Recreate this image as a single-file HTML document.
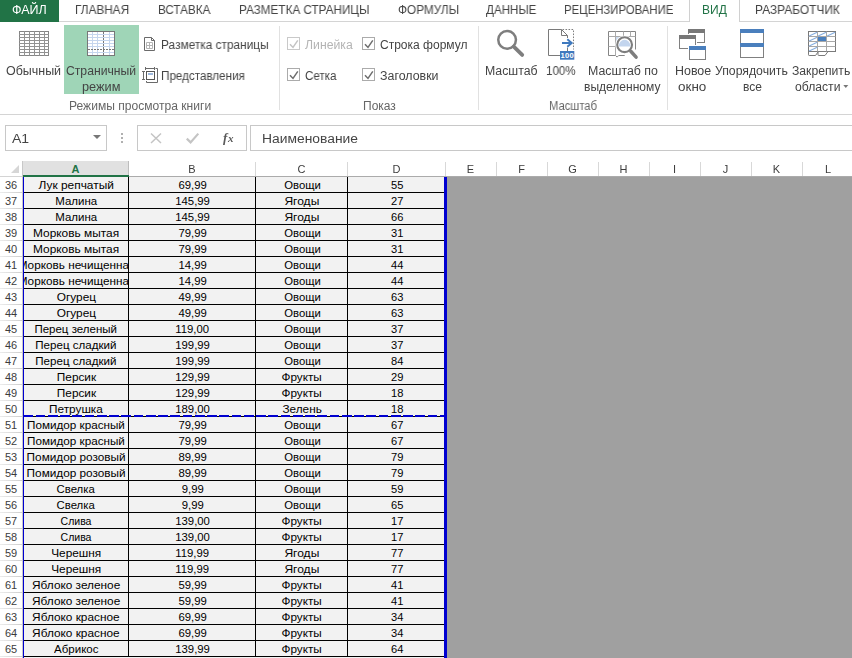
<!DOCTYPE html>
<html><head><meta charset="utf-8">
<style>
*{box-sizing:border-box;margin:0;padding:0}
html,body{width:852px;height:658px;overflow:hidden;background:#fff;font-family:"Liberation Sans",sans-serif}
#r{position:relative;width:852px;height:658px;overflow:hidden;background:#fff}
#r div,#r span,#r svg{position:absolute}
.t{white-space:pre;line-height:1;transform-origin:0 0;display:block;will-change:transform}
.t.l{will-change:auto}
/* grid */
.rn{left:0;width:22px;height:16px;font-size:11px;line-height:16px;color:#3c3c3c;text-align:center}
.rl{left:0;width:22px;height:1px;background:linear-gradient(90deg,#ececec,#cdcdcd)}
.c{height:15px;background:#f2f2f2;overflow:hidden;text-align:center;font-size:10.5px;line-height:15px;color:#000}
.c span{position:static!important;display:inline-block;white-space:pre;transform:translateX(0.6px) scaleX(1.125);transform-origin:50% 50%;padding-top:1px}
.c span.n{transform:translateX(0.5px) scaleX(1.08)}
.cd span.n{transform:translateX(1.4px) scaleX(1.06)}
.ca{left:24px;width:104px}
.cb{left:129px;width:126px}
.cc{left:256px;width:91px}
.cd{left:348px;width:96px}
.hl{left:24px;width:420px;height:1px;background:#000}
.ch{top:162px;width:20px;height:14px;font-size:11px;line-height:14px;text-align:center}
.cs{top:162px;width:1px;height:14px;background:#d8d8d8}
.vl{top:177px;width:1px;height:481px;background:#000}
</style></head><body><div id="r">
<!-- tab strip -->
<div style="left:0;top:0;width:59px;height:22px;background:#217346"></div>
<div style="left:59px;top:21px;width:793px;height:1px;background:#d4d4d4"></div>
<div style="left:689px;top:-1px;width:51px;height:23px;border:1px solid #d0d0d0;border-bottom:none;background:#fff"></div>
<!-- ribbon -->
<div style="left:64px;top:25px;width:75px;height:69px;background:#9fd5b7"></div>
<div style="left:279px;top:26px;width:1px;height:84px;background:#e1e1e1"></div>
<div style="left:478px;top:26px;width:1px;height:84px;background:#e1e1e1"></div>
<div style="left:667px;top:26px;width:1px;height:84px;background:#e1e1e1"></div>
<div style="left:0;top:114px;width:852px;height:1px;background:#d4d4d4"></div>
<!-- icon: normal view -->
<svg style="left:19px;top:31px" width="30" height="25" viewBox="0 0 30 25" shape-rendering="crispEdges">
<rect x="0.5" y="0.5" width="29" height="24" fill="#fff" stroke="#858585"/>
<path d="M5.500 0v25M10.500 0v25M15.500 0v25M20.500 0v25M25.500 0v25" stroke="#929292" fill="none"/>
<path d="M0 3.500h30M0 6.500h30M0 9.500h30M0 12.500h30M0 15.500h30M0 18.500h30M0 21.500h30" stroke="#929292" fill="none"/>
</svg>
<!-- icon: page break preview -->
<svg style="left:87px;top:31px" width="28" height="25" viewBox="0 0 28 25" shape-rendering="crispEdges">
<rect x="0.500" y="0.500" width="27" height="24" fill="#fff" stroke="#777"/>
<path d="M1 3.500h26M1 6.500h26M1 9.500h26M1 12.500h26M1 15.500h26M1 21.500h26" stroke="#c6d6ee" fill="none"/>
<path d="M5.500 1v23M10.500 1v23M22.500 1v23" stroke="#c6d6ee" fill="none"/>
<path d="M16.500 1v23" stroke="#777" stroke-dasharray="2 1" fill="none"/>
<path d="M1 18.500h26" stroke="#777" stroke-dasharray="2 1" fill="none"/>
</svg>
<!-- icon: page layout -->
<svg style="left:144px;top:37px" width="12" height="15" viewBox="0 0 12 15">
<path d="M0.5 0.5h7l3 3v10h-10z" fill="#fff" stroke="#6a6a6a"/>
<path d="M7.5 0.5v3h3" fill="none" stroke="#6a6a6a"/>
<path d="M2.5 5.5h6v6h-6zM5.5 5.5v6M2.5 8.5h6" fill="none" stroke="#b4b4b4"/>
</svg>
<!-- icon: custom views -->
<svg style="left:141px;top:66px" width="18" height="18" viewBox="0 0 18 18">
<path d="M4.5 2.5h9M4.5 1v3M13.5 1v3M2.5 5.5v8M1 5.5h3M1 13.5h3" stroke="#6a6a6a" fill="none"/>
<rect x="5.5" y="5.5" width="8" height="8" fill="#fff" stroke="#555"/>
<rect x="7" y="7" width="5" height="2" fill="#9db8dd"/>
<path d="M14.5 2.5h2v14h-11v-1.5" stroke="#6a6a6a" fill="none"/>
</svg>
<!-- checkboxes -->
<svg style="left:287px;top:37px" width="13" height="13" viewBox="0 0 13 13"><rect x="0.5" y="0.5" width="12" height="12" fill="#fff" stroke="#c9c9c9"/><path d="M3 7.2l3 3.2l4.8-7" stroke="#c4c4c4" stroke-width="1.5" fill="none"/></svg>
<svg style="left:362px;top:37px" width="13" height="13" viewBox="0 0 13 13"><rect x="0.5" y="0.5" width="12" height="12" fill="#fff" stroke="#ababab"/><path d="M3 7.2l3 3.2l4.8-7" stroke="#6e6e6e" stroke-width="1.5" fill="none"/></svg>
<svg style="left:287px;top:68px" width="13" height="13" viewBox="0 0 13 13"><rect x="0.5" y="0.5" width="12" height="12" fill="#fff" stroke="#ababab"/><path d="M3 7.2l3 3.2l4.8-7" stroke="#6e6e6e" stroke-width="1.5" fill="none"/></svg>
<svg style="left:362px;top:68px" width="13" height="13" viewBox="0 0 13 13"><rect x="0.5" y="0.5" width="12" height="12" fill="#fff" stroke="#ababab"/><path d="M3 7.2l3 3.2l4.8-7" stroke="#6e6e6e" stroke-width="1.5" fill="none"/></svg>
<!-- icon: zoom -->
<svg style="left:494px;top:28px" width="32" height="32" viewBox="0 0 32 32">
<circle cx="13.100" cy="11.800" r="8.850" fill="#fff" stroke="#7e7e7e" stroke-width="2.500"/>
<path d="M19.800 18.600l8.400 8.300" stroke="#7e7e7e" stroke-width="3.800" stroke-linecap="round"/>
</svg>
<!-- icon: 100% -->
<svg style="left:546px;top:28px" width="30" height="34" viewBox="0 0 30 34">
<path d="M2.500 1.500h13l6 6v20h-19z" fill="#fff" stroke="#7a7a7a"/>
<path d="M15.500 1.500v6h6" fill="none" stroke="#7a7a7a"/>
<path d="M16.500 1.500h11v20" fill="none" stroke="#7e7e7e" stroke-dasharray="1.600 1.400"/>
<rect x="14.500" y="10" width="12" height="9.500" fill="#fff"/>
<path d="M16 15h9.500M21.300 11.300l4.400 3.700l-4.400 3.700" fill="none" stroke="#3f79be" stroke-width="1.900"/>
<rect x="14" y="23" width="14.300" height="8.700" fill="#3f79be"/>
<text x="21.200" y="30.400" font-family="Liberation Sans" font-size="7.600" font-weight="700" fill="#fff" text-anchor="middle" letter-spacing="0.3">100</text>
</svg>
<!-- icon: zoom to selection -->
<svg style="left:606px;top:28px" width="34" height="34" viewBox="0 0 34 34">
<path d="M2.500 3.500h27v18M2.500 3.500v24h7l1.600 1.600l1.600-1.600h6" fill="#fff" stroke="#858585"/>
<path d="M2.500 8.500h27M2.500 18.500h9M9.500 3.500v24M17.500 3.500v5M24.500 3.500v5" fill="none" stroke="#ababab"/>
<rect x="10" y="9" width="8" height="6" fill="#c9d9ef"/>
<circle cx="18.600" cy="16.700" r="9.300" fill="#fff"/>
<path d="M24.600 23.200l5.700 6.100" stroke="#fff" stroke-width="5.500" stroke-linecap="round"/>
<circle cx="18.600" cy="16.700" r="7.400" fill="#fff" stroke="#7e7e7e" stroke-width="2.100"/>
<path d="M12.700 18.400a5.900 6.600 0 0 1 11.800 0z" fill="#c3d5ee"/>
<path d="M24.800 23.300l5.300 5.800" stroke="#7e7e7e" stroke-width="3.500" stroke-linecap="round"/>
</svg>
<!-- icon: new window -->
<svg style="left:678px;top:28px" width="30" height="33" viewBox="0 0 30 33" shape-rendering="crispEdges">
<rect x="10.5" y="1.5" width="16" height="13" fill="#fff" stroke="#808080"/>
<rect x="10" y="1" width="17" height="4" fill="#787878"/>
<rect x="0" y="6" width="19" height="16" fill="#fff"/>
<rect x="1.5" y="7.5" width="16" height="13" fill="#fff" stroke="#808080"/>
<rect x="1" y="7" width="17" height="4" fill="#787878"/>
<rect x="10" y="17" width="19" height="16" fill="#fff"/>
<rect x="11.5" y="18.5" width="16" height="13" fill="#fff" stroke="#808080"/>
<rect x="11" y="18" width="17" height="4" fill="#4a7fbd"/>
</svg>
<!-- icon: arrange all -->
<svg style="left:739px;top:28px" width="27" height="31" viewBox="0 0 27 31" shape-rendering="crispEdges">
<rect x="1.5" y="1.5" width="23" height="28" fill="#fff" stroke="#808080"/>
<rect x="1" y="1" width="24" height="4" fill="#4a7fbd"/>
<rect x="1" y="15" width="24" height="4" fill="#4a7fbd"/>
</svg>
<!-- icon: freeze panes -->
<svg style="left:807px;top:30px" width="30" height="27" viewBox="0 0 30 27">
<rect x="1.5" y="1.5" width="27" height="20" fill="#fff" stroke="#7a7a7a"/>
<path d="M1.5 6.5h27M1.5 11.5h27M1.5 16.5h27M10.5 1.5v20M19.5 1.5v20" fill="none" stroke="#a8a8a8"/>
<path d="M2.2 6l8-3.8M2.2 11l8-3.8M2.2 16l8-3.800M2.2 21l8-3.800M11.200 6l8-3.800M20.200 6l8-3.800" stroke="#86aee0" stroke-width="1.100" fill="none"/>
<rect x="11" y="7" width="8" height="4" fill="#4a7fbd"/>
<path d="M1.500 21.500v3.300q0 .7 .7 .7h6.300l2.500-3.500v2.800q0 .7 .7 .7h6.300l3-4" fill="none" stroke="#7a7a7a"/>
</svg>
<!-- dropdown arrow for freeze -->
<svg style="left:843px;top:85px" width="6" height="4" viewBox="0 0 6 4"><path d="M0.300 0h5l-2.500 3z" fill="#777"/></svg>
<!-- name box arrow -->
<svg style="left:93px;top:135px" width="8" height="4" viewBox="0 0 8 4"><path d="M0 0h8l-4 4z" fill="#777"/></svg>
<!-- dots -->
<div style="left:121px;top:133px;width:2px;height:2px;background:#b0b0b0"></div>
<div style="left:121px;top:137px;width:2px;height:2px;background:#b0b0b0"></div>
<div style="left:121px;top:141px;width:2px;height:2px;background:#b0b0b0"></div>
<!-- X, check, fx -->
<svg style="left:150px;top:132px" width="12" height="12" viewBox="0 0 12 12"><path d="M1 1.500l10 9.500M11 1.500l-10 9.500" stroke="#c4c4c4" stroke-width="1.500" fill="none"/></svg>
<svg style="left:185px;top:132px" width="16" height="12" viewBox="0 0 16 12"><path d="M1.800 6.600l3.800 3.800l7.700-8.800" stroke="#c4c4c4" stroke-width="2.200" fill="none"/></svg>
<span class="t" style="left:223px;top:131px;font-family:'Liberation Serif',serif;font-style:italic;font-weight:700;font-size:13px;color:#5a5a5a">f</span>
<span class="t" style="left:227.800px;top:133px;font-family:'Liberation Serif',serif;font-style:italic;font-weight:700;font-size:11px;color:#5a5a5a">x</span>
<!-- select all triangle -->
<svg style="left:11px;top:165px" width="8" height="8" viewBox="0 0 8 8"><path d="M8 0v8h-8z" fill="#d6d6d6"/></svg>

<!-- formula bar -->
<div style="left:5px;top:125px;width:102px;height:26px;border:1px solid #c8c8c8"></div>
<div style="left:137px;top:125px;width:110px;height:26px;border:1px solid #c8c8c8"></div>
<div style="left:250px;top:125px;width:610px;height:26px;border:1px solid #c8c8c8"></div>
<!-- column headers -->
<div style="left:22px;top:161px;width:107px;height:14px;background:#e1e1e1"></div>
<div style="left:22px;top:175px;width:107px;height:2px;background:#217346"></div>
<div style="left:128px;top:161px;width:1px;height:14px;background:#bdbdbd"></div>
<div style="left:129px;top:176px;width:723px;height:1px;background:#ababab"></div>
<div style="left:0;top:176px;width:22px;height:1px;background:#d4d4d4"></div>
<!-- gray area -->
<div style="left:447px;top:177px;width:405px;height:481px;background:#a0a0a0"></div>
<!-- grid -->
<div style="left:23px;top:177px;width:1px;height:481px;background:#0000d0"></div>
<div style="left:22px;top:161px;width:1px;height:497px;background:#c8c8c8"></div>
<div class="vl" style="left:128px"></div>
<div class="vl" style="left:255px"></div>
<div class="vl" style="left:347px"></div>
<div style="left:24px;top:657px;width:420px;height:1px;background:#f2f2f2"></div>
<div class="rn" style="top:177px">36</div>
<div class="c ca" style="top:177px"><span style="transform:translateX(0px) scaleX(1.133)">Лук репчатый</span></div>
<div class="c cb" style="top:177px"><span class="n">69,99</span></div>
<div class="c cc" style="top:177px"><span style="transform:translateX(0.6px) scaleX(1.075)">Овощи</span></div>
<div class="c cd" style="top:177px"><span class="n">55</span></div>
<div class="hl" style="top:192px"></div>
<div class="rl" style="top:192px"></div>
<div class="rn" style="top:193px">37</div>
<div class="c ca" style="top:193px"><span style="transform:translateX(0px) scaleX(1.093)">Малина</span></div>
<div class="c cb" style="top:193px"><span class="n">145,99</span></div>
<div class="c cc" style="top:193px"><span style="transform:translateX(0.6px) scaleX(1.145)">Ягоды</span></div>
<div class="c cd" style="top:193px"><span class="n">27</span></div>
<div class="hl" style="top:208px"></div>
<div class="rl" style="top:208px"></div>
<div class="rn" style="top:209px">38</div>
<div class="c ca" style="top:209px"><span style="transform:translateX(0px) scaleX(1.093)">Малина</span></div>
<div class="c cb" style="top:209px"><span class="n">145,99</span></div>
<div class="c cc" style="top:209px"><span style="transform:translateX(0.6px) scaleX(1.145)">Ягоды</span></div>
<div class="c cd" style="top:209px"><span class="n">66</span></div>
<div class="hl" style="top:224px"></div>
<div class="rl" style="top:224px"></div>
<div class="rn" style="top:225px">39</div>
<div class="c ca" style="top:225px"><span style="transform:translateX(0px) scaleX(1.132)">Морковь мытая</span></div>
<div class="c cb" style="top:225px"><span class="n">79,99</span></div>
<div class="c cc" style="top:225px"><span style="transform:translateX(0.6px) scaleX(1.075)">Овощи</span></div>
<div class="c cd" style="top:225px"><span class="n">31</span></div>
<div class="hl" style="top:240px"></div>
<div class="rl" style="top:240px"></div>
<div class="rn" style="top:241px">40</div>
<div class="c ca" style="top:241px"><span style="transform:translateX(0px) scaleX(1.132)">Морковь мытая</span></div>
<div class="c cb" style="top:241px"><span class="n">79,99</span></div>
<div class="c cc" style="top:241px"><span style="transform:translateX(0.6px) scaleX(1.075)">Овощи</span></div>
<div class="c cd" style="top:241px"><span class="n">31</span></div>
<div class="hl" style="top:256px"></div>
<div class="rl" style="top:256px"></div>
<div class="rn" style="top:257px">41</div>
<div class="c ca" style="top:257px"><span style="transform:translateX(0px) scaleX(1.12)">Морковь нечищенная</span></div>
<div class="c cb" style="top:257px"><span class="n">14,99</span></div>
<div class="c cc" style="top:257px"><span style="transform:translateX(0.6px) scaleX(1.075)">Овощи</span></div>
<div class="c cd" style="top:257px"><span class="n">44</span></div>
<div class="hl" style="top:272px"></div>
<div class="rl" style="top:272px"></div>
<div class="rn" style="top:273px">42</div>
<div class="c ca" style="top:273px"><span style="transform:translateX(0px) scaleX(1.12)">Морковь нечищенная</span></div>
<div class="c cb" style="top:273px"><span class="n">14,99</span></div>
<div class="c cc" style="top:273px"><span style="transform:translateX(0.6px) scaleX(1.075)">Овощи</span></div>
<div class="c cd" style="top:273px"><span class="n">44</span></div>
<div class="hl" style="top:288px"></div>
<div class="rl" style="top:288px"></div>
<div class="rn" style="top:289px">43</div>
<div class="c ca" style="top:289px"><span style="transform:translateX(0px) scaleX(1.128)">Огурец</span></div>
<div class="c cb" style="top:289px"><span class="n">49,99</span></div>
<div class="c cc" style="top:289px"><span style="transform:translateX(0.6px) scaleX(1.075)">Овощи</span></div>
<div class="c cd" style="top:289px"><span class="n">63</span></div>
<div class="hl" style="top:304px"></div>
<div class="rl" style="top:304px"></div>
<div class="rn" style="top:305px">44</div>
<div class="c ca" style="top:305px"><span style="transform:translateX(0px) scaleX(1.128)">Огурец</span></div>
<div class="c cb" style="top:305px"><span class="n">49,99</span></div>
<div class="c cc" style="top:305px"><span style="transform:translateX(0.6px) scaleX(1.075)">Овощи</span></div>
<div class="c cd" style="top:305px"><span class="n">63</span></div>
<div class="hl" style="top:320px"></div>
<div class="rl" style="top:320px"></div>
<div class="rn" style="top:321px">45</div>
<div class="c ca" style="top:321px"><span style="transform:translateX(0px) scaleX(1.095)">Перец зеленый</span></div>
<div class="c cb" style="top:321px"><span class="n">119,00</span></div>
<div class="c cc" style="top:321px"><span style="transform:translateX(0.6px) scaleX(1.075)">Овощи</span></div>
<div class="c cd" style="top:321px"><span class="n">37</span></div>
<div class="hl" style="top:336px"></div>
<div class="rl" style="top:336px"></div>
<div class="rn" style="top:337px">46</div>
<div class="c ca" style="top:337px"><span style="transform:translateX(0px) scaleX(1.101)">Перец сладкий</span></div>
<div class="c cb" style="top:337px"><span class="n">199,99</span></div>
<div class="c cc" style="top:337px"><span style="transform:translateX(0.6px) scaleX(1.075)">Овощи</span></div>
<div class="c cd" style="top:337px"><span class="n">37</span></div>
<div class="hl" style="top:352px"></div>
<div class="rl" style="top:352px"></div>
<div class="rn" style="top:353px">47</div>
<div class="c ca" style="top:353px"><span style="transform:translateX(0px) scaleX(1.101)">Перец сладкий</span></div>
<div class="c cb" style="top:353px"><span class="n">199,99</span></div>
<div class="c cc" style="top:353px"><span style="transform:translateX(0.6px) scaleX(1.075)">Овощи</span></div>
<div class="c cd" style="top:353px"><span class="n">84</span></div>
<div class="hl" style="top:368px"></div>
<div class="rl" style="top:368px"></div>
<div class="rn" style="top:369px">48</div>
<div class="c ca" style="top:369px"><span style="transform:translateX(0px) scaleX(1.125)">Персик</span></div>
<div class="c cb" style="top:369px"><span class="n">129,99</span></div>
<div class="c cc" style="top:369px"><span style="transform:translateX(0.6px) scaleX(1.118)">Фрукты</span></div>
<div class="c cd" style="top:369px"><span class="n">29</span></div>
<div class="hl" style="top:384px"></div>
<div class="rl" style="top:384px"></div>
<div class="rn" style="top:385px">49</div>
<div class="c ca" style="top:385px"><span style="transform:translateX(0px) scaleX(1.125)">Персик</span></div>
<div class="c cb" style="top:385px"><span class="n">129,99</span></div>
<div class="c cc" style="top:385px"><span style="transform:translateX(0.6px) scaleX(1.118)">Фрукты</span></div>
<div class="c cd" style="top:385px"><span class="n">18</span></div>
<div class="hl" style="top:400px"></div>
<div class="rl" style="top:400px"></div>
<div class="rn" style="top:401px">50</div>
<div class="c ca" style="top:401px"><span style="transform:translateX(0px) scaleX(1.121)">Петрушка</span></div>
<div class="c cb" style="top:401px"><span class="n">189,00</span></div>
<div class="c cc" style="top:401px"><span style="transform:translateX(0.6px) scaleX(1.12)">Зелень</span></div>
<div class="c cd" style="top:401px"><span class="n">18</span></div>
<div class="hl" style="top:416px"></div>
<div class="rl" style="top:416px"></div>
<div class="rn" style="top:417px">51</div>
<div class="c ca" style="top:417px"><span style="transform:translateX(0px) scaleX(1.113)">Помидор красный</span></div>
<div class="c cb" style="top:417px"><span class="n">79,99</span></div>
<div class="c cc" style="top:417px"><span style="transform:translateX(0.6px) scaleX(1.075)">Овощи</span></div>
<div class="c cd" style="top:417px"><span class="n">67</span></div>
<div class="hl" style="top:432px"></div>
<div class="rl" style="top:432px"></div>
<div class="rn" style="top:433px">52</div>
<div class="c ca" style="top:433px"><span style="transform:translateX(0px) scaleX(1.113)">Помидор красный</span></div>
<div class="c cb" style="top:433px"><span class="n">79,99</span></div>
<div class="c cc" style="top:433px"><span style="transform:translateX(0.6px) scaleX(1.075)">Овощи</span></div>
<div class="c cd" style="top:433px"><span class="n">67</span></div>
<div class="hl" style="top:448px"></div>
<div class="rl" style="top:448px"></div>
<div class="rn" style="top:449px">53</div>
<div class="c ca" style="top:449px"><span style="transform:translateX(0px) scaleX(1.122)">Помидор розовый</span></div>
<div class="c cb" style="top:449px"><span class="n">89,99</span></div>
<div class="c cc" style="top:449px"><span style="transform:translateX(0.6px) scaleX(1.075)">Овощи</span></div>
<div class="c cd" style="top:449px"><span class="n">79</span></div>
<div class="hl" style="top:464px"></div>
<div class="rl" style="top:464px"></div>
<div class="rn" style="top:465px">54</div>
<div class="c ca" style="top:465px"><span style="transform:translateX(0px) scaleX(1.122)">Помидор розовый</span></div>
<div class="c cb" style="top:465px"><span class="n">89,99</span></div>
<div class="c cc" style="top:465px"><span style="transform:translateX(0.6px) scaleX(1.075)">Овощи</span></div>
<div class="c cd" style="top:465px"><span class="n">79</span></div>
<div class="hl" style="top:480px"></div>
<div class="rl" style="top:480px"></div>
<div class="rn" style="top:481px">55</div>
<div class="c ca" style="top:481px"><span style="transform:translateX(0px) scaleX(1.08)">Свелка</span></div>
<div class="c cb" style="top:481px"><span class="n">9,99</span></div>
<div class="c cc" style="top:481px"><span style="transform:translateX(0.6px) scaleX(1.075)">Овощи</span></div>
<div class="c cd" style="top:481px"><span class="n">59</span></div>
<div class="hl" style="top:496px"></div>
<div class="rl" style="top:496px"></div>
<div class="rn" style="top:497px">56</div>
<div class="c ca" style="top:497px"><span style="transform:translateX(0px) scaleX(1.08)">Свелка</span></div>
<div class="c cb" style="top:497px"><span class="n">9,99</span></div>
<div class="c cc" style="top:497px"><span style="transform:translateX(0.6px) scaleX(1.075)">Овощи</span></div>
<div class="c cd" style="top:497px"><span class="n">65</span></div>
<div class="hl" style="top:512px"></div>
<div class="rl" style="top:512px"></div>
<div class="rn" style="top:513px">57</div>
<div class="c ca" style="top:513px"><span style="transform:translateX(0px) scaleX(1.0)">Слива</span></div>
<div class="c cb" style="top:513px"><span class="n">139,00</span></div>
<div class="c cc" style="top:513px"><span style="transform:translateX(0.6px) scaleX(1.118)">Фрукты</span></div>
<div class="c cd" style="top:513px"><span class="n">17</span></div>
<div class="hl" style="top:528px"></div>
<div class="rl" style="top:528px"></div>
<div class="rn" style="top:529px">58</div>
<div class="c ca" style="top:529px"><span style="transform:translateX(0px) scaleX(1.0)">Слива</span></div>
<div class="c cb" style="top:529px"><span class="n">139,00</span></div>
<div class="c cc" style="top:529px"><span style="transform:translateX(0.6px) scaleX(1.118)">Фрукты</span></div>
<div class="c cd" style="top:529px"><span class="n">17</span></div>
<div class="hl" style="top:544px"></div>
<div class="rl" style="top:544px"></div>
<div class="rn" style="top:545px">59</div>
<div class="c ca" style="top:545px"><span style="transform:translateX(0px) scaleX(1.125)">Черешня</span></div>
<div class="c cb" style="top:545px"><span class="n">119,99</span></div>
<div class="c cc" style="top:545px"><span style="transform:translateX(0.6px) scaleX(1.145)">Ягоды</span></div>
<div class="c cd" style="top:545px"><span class="n">77</span></div>
<div class="hl" style="top:560px"></div>
<div class="rl" style="top:560px"></div>
<div class="rn" style="top:561px">60</div>
<div class="c ca" style="top:561px"><span style="transform:translateX(0px) scaleX(1.125)">Черешня</span></div>
<div class="c cb" style="top:561px"><span class="n">119,99</span></div>
<div class="c cc" style="top:561px"><span style="transform:translateX(0.6px) scaleX(1.145)">Ягоды</span></div>
<div class="c cd" style="top:561px"><span class="n">77</span></div>
<div class="hl" style="top:576px"></div>
<div class="rl" style="top:576px"></div>
<div class="rn" style="top:577px">61</div>
<div class="c ca" style="top:577px"><span style="transform:translateX(0px) scaleX(1.126)">Яблоко зеленое</span></div>
<div class="c cb" style="top:577px"><span class="n">59,99</span></div>
<div class="c cc" style="top:577px"><span style="transform:translateX(0.6px) scaleX(1.118)">Фрукты</span></div>
<div class="c cd" style="top:577px"><span class="n">41</span></div>
<div class="hl" style="top:592px"></div>
<div class="rl" style="top:592px"></div>
<div class="rn" style="top:593px">62</div>
<div class="c ca" style="top:593px"><span style="transform:translateX(0px) scaleX(1.126)">Яблоко зеленое</span></div>
<div class="c cb" style="top:593px"><span class="n">59,99</span></div>
<div class="c cc" style="top:593px"><span style="transform:translateX(0.6px) scaleX(1.118)">Фрукты</span></div>
<div class="c cd" style="top:593px"><span class="n">41</span></div>
<div class="hl" style="top:608px"></div>
<div class="rl" style="top:608px"></div>
<div class="rn" style="top:609px">63</div>
<div class="c ca" style="top:609px"><span style="transform:translateX(0px) scaleX(1.126)">Яблоко красное</span></div>
<div class="c cb" style="top:609px"><span class="n">69,99</span></div>
<div class="c cc" style="top:609px"><span style="transform:translateX(0.6px) scaleX(1.118)">Фрукты</span></div>
<div class="c cd" style="top:609px"><span class="n">34</span></div>
<div class="hl" style="top:624px"></div>
<div class="rl" style="top:624px"></div>
<div class="rn" style="top:625px">64</div>
<div class="c ca" style="top:625px"><span style="transform:translateX(0px) scaleX(1.126)">Яблоко красное</span></div>
<div class="c cb" style="top:625px"><span class="n">69,99</span></div>
<div class="c cc" style="top:625px"><span style="transform:translateX(0.6px) scaleX(1.118)">Фрукты</span></div>
<div class="c cd" style="top:625px"><span class="n">34</span></div>
<div class="hl" style="top:640px"></div>
<div class="rl" style="top:640px"></div>
<div class="rn" style="top:641px">65</div>
<div class="c ca" style="top:641px"><span style="transform:translateX(0px) scaleX(1.095)">Абрикос</span></div>
<div class="c cb" style="top:641px"><span class="n">139,99</span></div>
<div class="c cc" style="top:641px"><span style="transform:translateX(0.6px) scaleX(1.118)">Фрукты</span></div>
<div class="c cd" style="top:641px"><span class="n">64</span></div>
<div class="hl" style="top:656px"></div>
<div class="rl" style="top:656px"></div>
<div class="ch" style="left:65.5px;color:#217346;font-weight:700">A</div>
<div class="ch" style="left:182px;color:#3c3c3c">B</div>
<div class="ch" style="left:291.5px;color:#3c3c3c">C</div>
<div class="ch" style="left:386.5px;color:#3c3c3c">D</div>
<div class="ch" style="left:460.5px;color:#3c3c3c">E</div>
<div class="ch" style="left:511.5px;color:#3c3c3c">F</div>
<div class="ch" style="left:562.5px;color:#3c3c3c">G</div>
<div class="ch" style="left:613.5px;color:#3c3c3c">H</div>
<div class="ch" style="left:664.5px;color:#3c3c3c">I</div>
<div class="ch" style="left:715.5px;color:#3c3c3c">J</div>
<div class="ch" style="left:766.5px;color:#3c3c3c">K</div>
<div class="ch" style="left:818px;color:#3c3c3c">L</div>
<div class="cs" style="left:255px"></div>
<div class="cs" style="left:347px"></div>
<div class="cs" style="left:445px"></div>
<div class="cs" style="left:496px"></div>
<div class="cs" style="left:547px"></div>
<div class="cs" style="left:598px"></div>
<div class="cs" style="left:649px"></div>
<div class="cs" style="left:700px"></div>
<div class="cs" style="left:751px"></div>
<div class="cs" style="left:802px"></div>
<div style="left:24px;top:415px;width:420px;height:2px;background:repeating-linear-gradient(90deg,#0000d0 0,#0000d0 9px,transparent 9px,transparent 11.650px,#0000d0 11.650px,#0000d0 12.250px)"></div>
<div style="left:444px;top:177px;width:3px;height:481px;background:#0000d0"></div>
<span class="t" style="left:11.55px;top:3.84px;font-size:12px;color:#fff;font-weight:400;font-style:normal;transform:scaleX(1.0427)">ФАЙЛ</span>
<span class="t" style="left:75.29px;top:3.84px;font-size:12px;color:#444;font-weight:400;font-style:normal;transform:scaleX(0.9831)">ГЛАВНАЯ</span>
<span class="t" style="left:157.60px;top:3.84px;font-size:12px;color:#444;font-weight:400;font-style:normal;transform:scaleX(0.9738)">ВСТАВКА</span>
<span class="t" style="left:238.60px;top:3.84px;font-size:12px;color:#444;font-weight:400;font-style:normal;transform:scaleX(0.9763)">РАЗМЕТКА СТРАНИЦЫ</span>
<span class="t" style="left:397.59px;top:3.84px;font-size:12px;color:#444;font-weight:400;font-style:normal;transform:scaleX(0.9850)">ФОРМУЛЫ</span>
<span class="t" style="left:486.00px;top:3.84px;font-size:12px;color:#444;font-weight:400;font-style:normal;transform:scaleX(0.9674)">ДАННЫЕ</span>
<span class="t" style="left:564.32px;top:3.84px;font-size:12px;color:#444;font-weight:400;font-style:normal;transform:scaleX(0.9476)">РЕЦЕНЗИРОВАНИЕ</span>
<span class="t" style="left:702.28px;top:3.84px;font-size:12px;color:#217346;font-weight:400;font-style:normal;transform:scaleX(0.9989)">ВИД</span>
<span class="t" style="left:754.59px;top:3.84px;font-size:12px;color:#444;font-weight:400;font-style:normal;transform:scaleX(0.9916)">РАЗРАБОТЧИК</span>
<span class="t" style="left:5.95px;top:64.84px;font-size:12px;color:#444;font-weight:400;font-style:normal;transform:scaleX(1.0386)">Обычный</span>
<span class="t" style="left:65.97px;top:64.84px;font-size:12px;color:#444;font-weight:400;font-style:normal;transform:scaleX(1.0147)">Страничный</span>
<span class="t" style="left:82.04px;top:80.84px;font-size:12px;color:#444;font-weight:400;font-style:normal;transform:scaleX(1.0615)">режим</span>
<span class="t" style="left:160.59px;top:38.84px;font-size:12px;color:#444;font-weight:400;font-style:normal;transform:scaleX(0.9885)">Разметка страницы</span>
<span class="t" style="left:161.00px;top:69.84px;font-size:12px;color:#444;font-weight:400;font-style:normal;transform:scaleX(0.9715)">Представления</span>
<span class="t" style="left:304.76px;top:38.84px;font-size:12px;color:#b4b4b4;font-weight:400;font-style:normal;transform:scaleX(1.0211)">Линейка</span>
<span class="t" style="left:304.81px;top:69.84px;font-size:12px;color:#444;font-weight:400;font-style:normal;transform:scaleX(0.9620)">Сетка</span>
<span class="t" style="left:379.78px;top:38.84px;font-size:12px;color:#444;font-weight:400;font-style:normal;transform:scaleX(1.0008)">Строка формул</span>
<span class="t" style="left:379.76px;top:69.84px;font-size:12px;color:#444;font-weight:400;font-style:normal;transform:scaleX(1.0335)">Заголовки</span>
<span class="t" style="left:484.96px;top:64.84px;font-size:12px;color:#444;font-weight:400;font-style:normal;transform:scaleX(1.0240)">Масштаб</span>
<span class="t" style="left:546.00px;top:64.84px;font-size:12px;color:#444;font-weight:400;font-style:normal;transform:scaleX(0.9671)">100%</span>
<span class="t" style="left:587.56px;top:64.84px;font-size:12px;color:#444;font-weight:400;font-style:normal;transform:scaleX(1.0298)">Масштаб по</span>
<span class="t" style="left:583.98px;top:80.84px;font-size:12px;color:#444;font-weight:400;font-style:normal;transform:scaleX(1.0023)">выделенному</span>
<span class="t" style="left:674.55px;top:64.84px;font-size:12px;color:#444;font-weight:400;font-style:normal;transform:scaleX(1.0359)">Новое</span>
<span class="t" style="left:678.19px;top:80.84px;font-size:12px;color:#444;font-weight:400;font-style:normal;transform:scaleX(1.1221)">окно</span>
<span class="t" style="left:715.17px;top:64.84px;font-size:12px;color:#444;font-weight:400;font-style:normal;transform:scaleX(1.0203)">Упорядочить</span>
<span class="t" style="left:742.69px;top:80.84px;font-size:12px;color:#444;font-weight:400;font-style:normal;transform:scaleX(0.9896)">все</span>
<span class="t" style="left:792.27px;top:64.84px;font-size:12px;color:#444;font-weight:400;font-style:normal;transform:scaleX(1.0138)">Закрепить</span>
<span class="t" style="left:794.77px;top:80.84px;font-size:12px;color:#444;font-weight:400;font-style:normal;transform:scaleX(1.0126)">области</span>
<span class="t" style="left:68.58px;top:99.84px;font-size:12px;color:#666;font-weight:400;font-style:normal;transform:scaleX(1.0059)">Режимы просмотра книги</span>
<span class="t" style="left:363.09px;top:99.84px;font-size:12px;color:#666;font-weight:400;font-style:normal;transform:scaleX(0.9867)">Показ</span>
<span class="t" style="left:549.03px;top:99.84px;font-size:12px;color:#666;font-weight:400;font-style:normal;transform:scaleX(0.9338)">Масштаб</span>
<span class="t l" style="left:11.96px;top:132.00px;font-size:13px;color:#444;font-weight:400;font-style:normal;transform:scaleX(1.0804)">A1</span>
<span class="t l" style="left:261.97px;top:133.42px;font-size:12.5px;color:#444;font-weight:400;font-style:normal;transform:scaleX(1.1074)">Наименование</span>
</div></body></html>
